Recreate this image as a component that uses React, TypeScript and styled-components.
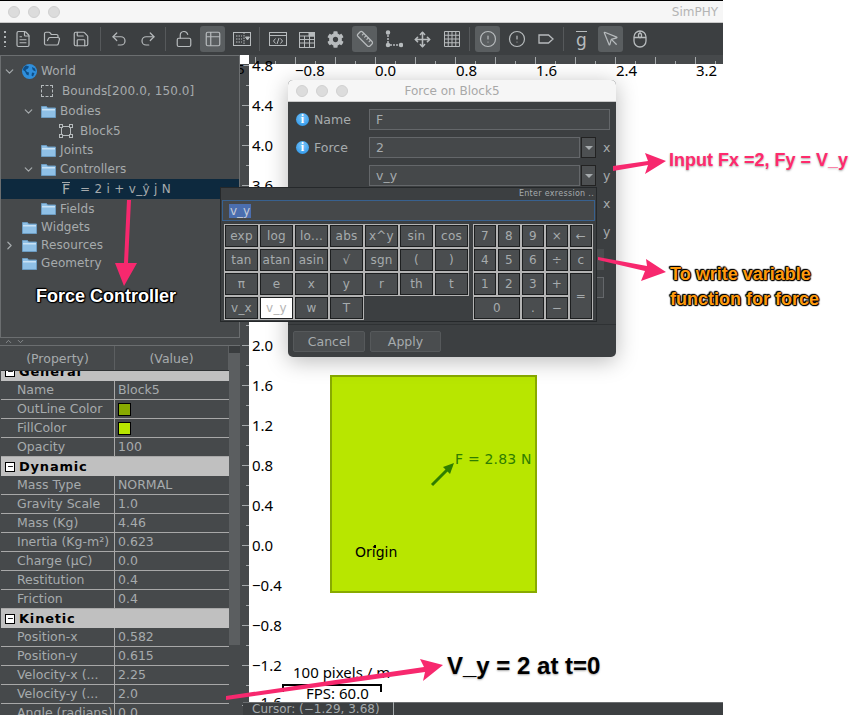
import * as React from "react";
import styled, { createGlobalStyle } from "styled-components";
import {
	FileText, FolderOpen, Save, Undo2, Redo2, LockOpen, Table2, Ruler,
	Move, CircleAlert, MousePointer, ChevronDown, ChevronRight,
	ChevronUp, Minus,
} from "lucide-react";
import { FaCog } from "react-icons/fa";

const GlobalStyle = createGlobalStyle`
	html, body {
		margin: 0;
		padding: 0;
		height: 100%;
		overflow: hidden;
		background: #fff;
	}
	#root {
		height: 100%;
	}
`;

const UI_FONT = `"DejaVu Sans", "Liberation Sans", sans-serif`;
const DARK = "#3c3f41";
const PANEL = "#46494b";
const TEXT = "#a6abad";
const LINE = "#6b6e70";

const Page = styled.div`
	position: relative;
	width: 858px;
	height: 715px;
	overflow: hidden;
	background: #fff;
	font-family: ${UI_FONT};
	font-size: 12px;
	color: ${TEXT};
`;

const AppWindow = styled.div`
	width: 723px;
	height: 715px;
	display: flex;
	flex-direction: column;
	overflow: hidden;
`;

const TitleBar = styled.div`
	height: 23px;
	flex: none;
	box-sizing: border-box;
	display: flex;
	align-items: center;
	gap: 8px;
	padding: 0 5px 0 8px;
	background: #f6f6f6;
	border-top: 1px solid #000;
	border-bottom: 1px solid #c9c9c9;
`;

const Light = styled.span`
	width: 12px;
	height: 12px;
	border-radius: 50%;
	background: #dcdcdc;
	border: 1px solid #d0d0d0;
	box-sizing: border-box;
`;

const WindowTitle = styled.span`
	margin-left: auto;
	color: #b4b4b4;
	font-size: 12px;
`;

const Toolbar = styled.div`
	height: 32px;
	flex: none;
	display: flex;
	align-items: center;
	background: ${DARK};
	padding-left: 4px;
	box-sizing: border-box;
`;

const Grip = styled.span`
	width: 2px;
	height: 16px;
	margin-right: 2px;
	background: repeating-linear-gradient(to bottom, #b0b4b6 0 2px, transparent 2px 5px);
`;

const ToolButton = styled.span<{ $active?: boolean }>`
	width: 25px;
	height: 26px;
	flex: none;
	margin: 0 2px;
	display: flex;
	align-items: center;
	justify-content: center;
	border-radius: 3px;
	color: #b7bbbd;
	background: ${(p) => (p.$active ? "#5a5e60" : "transparent")};
`;

const ToolSeparator = styled.span<{ $first?: boolean }>`
	width: 1px;
	height: 24px;
	flex: none;
	margin: 0 3px 0 ${(p) => (p.$first ? 5 : 3)}px;
	background: #56595b;
`;

const GText = styled.span`
	font-size: 17px;
	line-height: 16px;
	border-top: 1px solid #b7bbbd;
	color: #b7bbbd;
`;

const Main = styled.div`
	flex: 1;
	min-height: 0;
	display: flex;
`;

const LeftColumn = styled.div`
	width: 240px;
	flex: none;
	display: flex;
	flex-direction: column;
	background: ${PANEL};
`;

const TreePanel = styled.div`
	height: 283px;
	flex: none;
	box-sizing: border-box;
	border: 1px solid ${LINE};
	padding-top: 5px;
`;

const TreeRow = styled.div<{ $height: number; $selected?: boolean }>`
	height: ${(p) => p.$height}px;
	display: flex;
	align-items: center;
	white-space: nowrap;
	background: ${(p) => (p.$selected ? "#0d293e" : "transparent")};
`;

const TreeIndent = styled.span<{ $width: number }>`
	width: ${(p) => p.$width}px;
	flex: none;
	display: flex;
	justify-content: flex-end;
	padding-right: 6px;
	box-sizing: border-box;
	color: #a6abad;
`;

const TreeLabel = styled.span<{ $gap: number }>`
	margin-left: ${(p) => p.$gap}px;
	font-size: 12px;
	letter-spacing: 0.1px;
`;

const BoundsBox = styled.span`
	width: 12px;
	height: 12px;
	margin-left: -1px;
	border: 1px dashed #b5babc;
	box-sizing: border-box;
`;

const ForceSymbol = styled.span`
	font-size: 14px;
	line-height: 13px;
	border-top: 1px solid #a6abad;
	margin-right: 10px;
`;

const ForceExpression = styled.span`
	letter-spacing: 0.3px;
`;

const Splitter = styled.div`
	height: 7px;
	flex: none;
	display: flex;
	align-items: center;
	gap: 3px;
	padding-left: 4px;
	color: #9a9ea0;
	overflow: hidden;
`;

const PropertyPanel = styled.div`
	flex: 1;
	min-height: 0;
	display: flex;
	border-top: 1px solid ${LINE};
`;

const PropertyTable = styled.div`
	width: 228px;
	flex: none;
	display: flex;
	flex-direction: column;
	margin-left: 1px;
	font-size: 12.5px;
`;

const TableHead = styled.div`
	height: 24px;
	flex: none;
	display: grid;
	grid-template-columns: 114px 114px;
	border-bottom: 1px solid #2f3234;
`;

const HeadCell = styled.div`
	display: flex;
	align-items: center;
	justify-content: center;
	border-right: 1px solid #5c5f61;
`;

const TableBody = styled.div`
	flex: 1;
	min-height: 0;
	overflow: hidden;
`;

const TableRows = styled.div`
	margin-top: -9px;
`;

const GroupRow = styled.div`
	height: 19px;
	display: flex;
	align-items: center;
	gap: 4px;
	padding-left: 4px;
	box-sizing: border-box;
	background: #c0c0c0;
	color: #000;
	font-weight: bold;
	font-size: 13px;
	letter-spacing: 0.8px;
`;

const GroupToggle = styled.span`
	width: 8px;
	height: 8px;
	flex: none;
	display: flex;
	align-items: center;
	justify-content: center;
	background: #fff;
	border: 1px solid #000;
	color: #000;
`;

const DataRow = styled.div`
	height: 19px;
	display: grid;
	grid-template-columns: 114px 114px;
	box-sizing: border-box;
	border-bottom: 1px solid #a8a8a8;
`;

const NameCell = styled.div`
	padding-left: 16px;
	border-right: 1px solid #a8a8a8;
	line-height: 18px;
	white-space: nowrap;
	overflow: hidden;
`;

const ValueCell = styled.div`
	padding-left: 3px;
	line-height: 18px;
	display: flex;
	align-items: center;
`;

const Swatch = styled.span<{ $color: string }>`
	width: 11px;
	height: 11px;
	background: ${(p) => p.$color};
	border: 1px solid #000;
`;

const ScrollTrack = styled.div`
	width: 11px;
	flex: none;
	display: flex;
	flex-direction: column;
	background: ${PANEL};
`;

const ScrollCap = styled.div`
	height: 7px;
	background: #3a3d3f;
`;

const ScrollThumb = styled.div`
	height: 292px;
	background: #5b5e60;
`;

const CanvasColumn = styled.div`
	flex: 1;
	min-width: 0;
	display: flex;
	flex-direction: column;
`;

const TopRuler = styled.div`
	height: 9px;
	flex: none;
	margin-left: 9px;
	background-color: ${PANEL};
	background-image:
		repeating-linear-gradient(to right, #a4a8aa 0 1px, transparent 1px 40px),
		repeating-linear-gradient(to right, #a4a8aa 0 1px, transparent 1px 40px);
	background-size: 40px 7px, 40px 3px;
	background-position: 6px bottom, 26px bottom;
	background-repeat: repeat-x;
`;

const CanvasRow = styled.div`
	flex: 1;
	min-height: 0;
	display: flex;
`;

const LeftRuler = styled.div`
	width: 9px;
	flex: none;
	position: relative;
	overflow: hidden;
	color: #000;
	background-color: ${PANEL};
	background-image:
		repeating-linear-gradient(to bottom, #a4a8aa 0 1px, transparent 1px 40px),
		repeating-linear-gradient(to bottom, #a4a8aa 0 1px, transparent 1px 40px);
	background-size: 7px 40px, 3px 40px;
	background-position: right 1px, right 21px;
	background-repeat: repeat-y;
`;

const RulerClip = styled.span`
	position: absolute;
	right: 4px;
	top: -2px;
	font-size: 13px;
`;

const Canvas = styled.div`
	flex: 1;
	position: relative;
	background: #fff;
	color: #000;
	font-family: "Noto Sans", "DejaVu Sans", sans-serif;
	font-size: 15px;
`;

const AxisLabel = styled.span<{ $x: number; $y: number }>`
	position: absolute;
	left: ${(p) => p.$x}px;
	top: ${(p) => p.$y}px;
	line-height: 16px;
	white-space: nowrap;
`;

const Block = styled.div`
	position: absolute;
	left: 81px;
	top: 311px;
	width: 207px;
	height: 218px;
	box-sizing: border-box;
	background: #b8e600;
	border: 2px solid #88aa00;
	font-family: ${UI_FONT};
	font-size: 14px;
`;

const ForceLabel = styled.span`
	position: absolute;
	left: 123px;
	top: 74px;
	color: #2f7d00;
	letter-spacing: 0.2px;
	white-space: nowrap;
`;

const OriginLabel = styled.span`
	position: absolute;
	left: 23px;
	top: 167px;
	color: #000;
`;

const OriginDot = styled.span`
	position: absolute;
	left: 42px;
	top: 168px;
	width: 2px;
	height: 3px;
	background: #000;
`;

const ForceArrow = styled.svg`
	position: absolute;
	left: 98px;
	top: 84px;
`;

const ScaleBar = styled.div`
	position: absolute;
	left: 33px;
	top: 620px;
	width: 100px;
	height: 8px;
	border: 2px solid #000;
	border-bottom: none;
	box-sizing: border-box;
`;

const StatusBar = styled.div`
	position: absolute;
	left: 243px;
	top: 702px;
	width: 480px;
	height: 13px;
	display: flex;
	align-items: center;
	padding-left: 9px;
	box-sizing: border-box;
	background: ${DARK};
	border-top: 1px solid #6b6e70;
	font-size: 12px;
`;

const StatusText = styled.span`
	width: 141px;
	flex: none;
	white-space: nowrap;
	border-right: 1px solid #a6abad;
`;

const Dialog = styled.div`
	position: absolute;
	left: 288px;
	top: 80px;
	width: 328px;
	height: 277px;
	display: flex;
	flex-direction: column;
	border-radius: 5px;
	overflow: hidden;
	background: ${DARK};
	box-shadow: 0 4px 22px rgba(0, 0, 0, 0.28);
`;

const DialogTitleBar = styled.div`
	height: 21px;
	flex: none;
	position: relative;
	display: flex;
	align-items: center;
	justify-content: center;
	background: #f6f6f6;
	border-bottom: 1px solid #c9c9c9;
	color: #a8a8a8;
`;

const DialogLights = styled.div`
	position: absolute;
	left: 8px;
	display: flex;
	gap: 8px;
`;

const DialogBody = styled.div`
	flex: 1;
	display: flex;
	flex-direction: column;
	gap: 7px;
	padding: 7px 6px 0 8px;
`;

const FormRow = styled.div`
	height: 21px;
	display: flex;
	align-items: center;
`;

const FormLabel = styled.div`
	width: 73px;
	flex: none;
	display: flex;
	align-items: center;
	gap: 5px;
	font-size: 12.5px;
`;

const InfoDot = styled.span`
	width: 13px;
	height: 13px;
	border-radius: 50%;
	display: flex;
	align-items: center;
	justify-content: center;
	background: radial-gradient(circle at 50% 35%, #7cc6f8, #1f8fe8);
	color: #fff;
	font-family: "Liberation Serif", serif;
	font-weight: bold;
	font-size: 12px;
`;

const FormInput = styled.div<{ $width: number; $plain?: boolean }>`
	width: ${(p) => p.$width}px;
	height: 21px;
	flex: none;
	box-sizing: border-box;
	display: flex;
	align-items: center;
	padding-left: 6px;
	background: ${(p) => (p.$plain ? "#4a4d4f" : "#45484a")};
	border: 1px solid ${(p) => (p.$plain ? "transparent" : "#64676a")};
	font-size: 12.5px;
`;

const DropButton = styled.span`
	width: 15px;
	height: 21px;
	flex: none;
	margin-left: 1px;
	box-sizing: border-box;
	display: flex;
	align-items: center;
	justify-content: center;
	border: 1px solid #222;
	background: #4d5052;
	&::after {
		content: "";
		border-left: 4px solid transparent;
		border-right: 4px solid transparent;
		border-top: 4px solid #a6abad;
	}
`;

const AxisName = styled.span`
	margin-left: 7px;
	font-size: 12.5px;
`;

const DialogFooter = styled.div`
	height: 33px;
	flex: none;
	display: flex;
	gap: 5px;
	padding: 6px 0 0 5px;
	box-sizing: border-box;
	border-top: 1px solid #2f3234;
	margin-top: auto;
`;

const FooterButton = styled.span<{ $width: number }>`
	width: ${(p) => p.$width}px;
	height: 21px;
	display: flex;
	align-items: center;
	justify-content: center;
	border-radius: 2px;
	background: #4a4d4f;
	border: 1px solid #56595b;
	box-sizing: border-box;
	font-size: 12.5px;
`;

const ExpressionPopup = styled.div`
	position: absolute;
	left: 220px;
	top: 187px;
	width: 377px;
	height: 135px;
	box-sizing: border-box;
	background: ${DARK};
	border: 1px solid #25282a;
	padding: 0 1px;
`;

const PopupHint = styled.div`
	height: 12px;
	text-align: right;
	font-size: 8px;
	line-height: 12px;
	letter-spacing: 0.3px;
	padding-right: 1px;
`;

const ExpressionInput = styled.div`
	height: 21px;
	box-sizing: border-box;
	display: flex;
	align-items: center;
	padding-left: 6px;
	background: #45484a;
	border: 1px solid #38618f;
`;

const Selected = styled.span`
	background: #4b6eaf;
	color: #c6ccd8;
	padding: 0 1px;
`;

const Keypads = styled.div`
	display: flex;
	gap: 4px;
	margin-top: 3px;
	padding-left: 2px;
`;

const KeyGrid = styled.div<{ $cols: number; $cell: number }>`
	display: grid;
	grid-template-columns: repeat(${(p) => p.$cols}, ${(p) => p.$cell}px);
	grid-auto-rows: 24px;
	align-self: flex-start;
	background: transparent;
`;

const Key = styled.span<{ $active?: boolean; $wide?: boolean; $tall?: boolean }>`
	display: flex;
	align-items: center;
	justify-content: center;
	box-sizing: border-box;
	white-space: nowrap;
	border: 1px solid #b4b4b4;
	outline: 1px solid #1d1f20;
	outline-offset: -2px;
	background: ${(p) => (p.$active ? "#fff" : "#4a4d4f")};
	color: ${(p) => (p.$active ? "#b4b4b4" : TEXT)};
	font-size: 12px;
	letter-spacing: 0.2px;
	${(p) => (p.$wide ? "grid-column: span 2;" : "")}
	${(p) => (p.$tall ? "grid-row: span 2;" : "")}
`;

const Overlay = styled.svg`
	position: absolute;
	left: 0;
	top: 0;
	pointer-events: none;
`;

const Note = styled.div<{ $x: number; $y: number; $size: number; $kind: "white" | "pink" | "orange" | "black" }>`
	position: absolute;
	left: ${(p) => p.$x}px;
	top: ${(p) => p.$y}px;
	font-family: "Liberation Sans", Arial, sans-serif;
	font-weight: bold;
	font-size: ${(p) => p.$size}px;
	line-height: 25px;
	white-space: nowrap;
	color: ${(p) =>
		p.$kind === "white" ? "#fff" : p.$kind === "pink" ? "#ff2a6d" : p.$kind === "orange" ? "#ff9a0d" : "#000"};
	text-shadow: ${(p) =>
		p.$kind === "white" || p.$kind === "orange"
			? "1px 0 1px #000, -1px 0 1px #000, 0 1px 1px #000, 0 -1px 1px #000, 1px 1px 1px #000, -1px -1px 1px #000"
			: "0 1px 2px rgba(0,0,0,0.35), 1px 0 1px #fff, -1px 0 1px #fff"};
`;

const Icon = { size: 18, strokeWidth: 1.6 };

type TreeEntry = { h: number; indent: number; gap?: number; chevron?: "down" | "right"; icon: string; label: string };

const treeRows: TreeEntry[] = [
	{ h: 20, indent: 21, chevron: "down", icon: "globe", label: "World" },
	{ h: 20, indent: 41, gap: 9, icon: "bounds", label: "Bounds[200.0, 150.0]" },
	{ h: 20, indent: 40, chevron: "down", icon: "folder", label: "Bodies" },
	{ h: 20, indent: 58, gap: 7, icon: "body", label: "Block5" },
	{ h: 18, indent: 40, icon: "folder", label: "Joints" },
	{ h: 20, indent: 40, chevron: "down", icon: "folder", label: "Controllers" },
];

const treeRowsAfter: TreeEntry[] = [
	{ h: 19, indent: 40, icon: "folder", label: "Fields" },
	{ h: 18, indent: 21, icon: "folder", label: "Widgets" },
	{ h: 18, indent: 21, chevron: "right", icon: "folder", label: "Resources" },
	{ h: 18, indent: 21, icon: "folder", label: "Geometry" },
];

const GlobeIcon = () => (
	<svg width="15" height="15" viewBox="0 0 15 15">
		<circle cx="7.5" cy="7.5" r="7.5" fill="#2f8fdc" />
		<path d="M4 1.5l3 1-1 2-2.5 1.5 1.5 2 2 .5-.5 3-2-1-1.5-3-2-1.5C1 4 2.5 2.5 4 1.5zM10 3l3 1.5.8 3-2.3-1-1-1zM10 8.5l2.5.5-1.5 3.5-1.5-1z" fill="#0f4f88" />
	</svg>
);

const FolderIcon = () => (
	<svg width="15" height="13" viewBox="0 0 15 13">
		<path d="M0.5 1.5h5l1 1.5h8v9.5h-14z" fill="#8fc0e6" stroke="#6c9cc2" />
		<rect x="1" y="4" width="13" height="1.5" fill="#c8e2f6" />
	</svg>
);

const BodyIcon = () => (
	<svg width="14" height="14" viewBox="0 0 14 14" fill="none" stroke="#b5babc">
		<rect x="2.5" y="2.5" width="9" height="9" />
		<rect x="0.5" y="0.5" width="3" height="3" fill="#46494b" />
		<rect x="10.5" y="0.5" width="3" height="3" fill="#46494b" />
		<rect x="0.5" y="10.5" width="3" height="3" fill="#46494b" />
		<rect x="10.5" y="10.5" width="3" height="3" fill="#46494b" />
	</svg>
);

function TreeItem({ row }: { row: TreeEntry }) {
	return (
		<TreeRow $height={row.h}>
			<TreeIndent $width={row.indent}>
				{row.chevron === "down" && <ChevronDown size={13} strokeWidth={2.2} />}
				{row.chevron === "right" && <ChevronRight size={13} strokeWidth={2.2} />}
			</TreeIndent>
			{row.icon === "globe" && <GlobeIcon />}
			{row.icon === "bounds" && <BoundsBox />}
			{row.icon === "folder" && <FolderIcon />}
			{row.icon === "body" && <BodyIcon />}
			<TreeLabel $gap={row.gap ?? 4}>{row.label}</TreeLabel>
		</TreeRow>
	);
}

type PropRow = { group: string } | { name: React.ReactNode; value?: string; swatch?: string };

const propRows: PropRow[] = [
	{ group: "General" },
	{ name: "Name", value: "Block5" },
	{ name: "OutLine Color", swatch: "#88aa00" },
	{ name: "FillColor", swatch: "#b8e600" },
	{ name: "Opacity", value: "100" },
	{ group: "Dynamic" },
	{ name: "Mass Type", value: "NORMAL" },
	{ name: "Gravity Scale", value: "1.0" },
	{ name: "Mass (Kg)", value: "4.46" },
	{ name: "Inertia (Kg-m²)", value: "0.623" },
	{ name: "Charge (µC)", value: "0.0" },
	{ name: "Restitution", value: "0.4" },
	{ name: "Friction", value: "0.4" },
	{ group: "Kinetic" },
	{ name: "Position-x", value: "0.582" },
	{ name: "Position-y", value: "0.615" },
	{ name: "Velocity-x (...", value: "2.25" },
	{ name: "Velocity-y (...", value: "2.0" },
	{ name: "Angle (radians)", value: "0.0" },
];

const xLabels: [string, number][] = [["−0.8", 46], ["0.0", 126], ["0.8", 207], ["1.6", 287], ["2.4", 367], ["3.2", 447]];
const yLabels: [string, number][] = [
	["4.8", -7], ["4.4", 33], ["4.0", 73], ["3.6", 113], ["2.0", 273], ["1.6", 313], ["1.2", 353], ["0.8", 393],
	["0.4", 433], ["0.0", 473], ["−0.4", 513], ["−0.8", 553], ["−1.2", 593], ["−1.6", 630],
];

const leftKeys = ["exp", "log", "lo...", "abs", "x^y", "sin", "cos", "tan", "atan", "asin", "√", "sgn", "(", ")", "π", "e", "x", "y", "r", "th", "t", "v_x", "v_y", "w", "T"];

export default function App() {
	return (
		<Page>
			<GlobalStyle />
			<AppWindow>
				<TitleBar>
					<Light />
					<Light />
					<Light />
					<WindowTitle>SimPHY</WindowTitle>
				</TitleBar>
				<Toolbar>
					<Grip />
					<ToolButton><FileText {...Icon} /></ToolButton>
					<ToolButton><FolderOpen {...Icon} /></ToolButton>
					<ToolButton><Save {...Icon} /></ToolButton>
					<ToolSeparator $first />
					<ToolButton><Undo2 {...Icon} /></ToolButton>
					<ToolButton><Redo2 {...Icon} /></ToolButton>
					<ToolSeparator />
					<ToolButton><LockOpen {...Icon} /></ToolButton>
					<ToolButton $active><Table2 {...Icon} /></ToolButton>
					<ToolButton>
						<svg width="18" height="16" viewBox="0 0 18 16" fill="none" stroke="currentColor">
							<rect x="0.5" y="1.5" width="17" height="13" />
							<path d="M11 1.5v13M3 5h6M3 8h6M3 11h6" strokeDasharray="1.5 1" />
							<path d="M12.5 6h4l-2 3z" fill="currentColor" />
						</svg>
					</ToolButton>
					<ToolSeparator />
					<ToolButton>
						<svg width="18" height="16" viewBox="0 0 18 16" fill="none" stroke="currentColor">
							<rect x="0.5" y="1.5" width="17" height="13" />
							<path d="M0.5 4.5h17M6.5 7.5l-2 2.5 2 2.5M11.5 7.5l2 2.5-2 2.5M10 7l-2 6" />
						</svg>
					</ToolButton>
					<ToolButton>
						<svg width="16" height="17" viewBox="0 0 16 17" fill="none" stroke="currentColor">
							<rect x="0.5" y="1.5" width="15" height="15" />
							<path d="M0.5 5h15M0.5 8.5h15M0.5 12h15M5.5 5v11M10.5 5v11" />
							<rect x="10" y="1.5" width="5.5" height="3.5" fill="currentColor" />
						</svg>
					</ToolButton>
					<ToolButton><FaCog size={17} /></ToolButton>
					<ToolButton $active><Ruler {...Icon} /></ToolButton>
					<ToolButton>
						<svg width="18" height="18" viewBox="0 0 18 18" fill="none" stroke="currentColor" strokeWidth="1.5">
							<path d="M3 2v13h13" strokeDasharray="2 1" />
							<circle cx="3" cy="2.5" r="1.5" fill="currentColor" />
							<circle cx="3" cy="15" r="1.5" fill="currentColor" />
							<circle cx="16" cy="15" r="1.5" fill="currentColor" />
						</svg>
					</ToolButton>
					<ToolButton><Move size={17} strokeWidth={2.2} /></ToolButton>
					<ToolButton>
						<svg width="16" height="16" viewBox="0 0 16 16" fill="none" stroke="currentColor">
							<path d="M0.5 0.5h15v15h-15zM4.25 0.5v15M8 0.5v15M11.75 0.5v15M0.5 4.25h15M0.5 8h15M0.5 11.75h15" />
						</svg>
					</ToolButton>
					<ToolSeparator />
					<ToolButton $active><CircleAlert {...Icon} /></ToolButton>
					<ToolButton><CircleAlert {...Icon} /></ToolButton>
					<ToolButton>
						<svg width="16" height="12" viewBox="0 0 16 12" fill="none" stroke="currentColor" strokeWidth="1.3">
							<path d="M1 2h9.5L15 6l-4.5 4H1z" />
						</svg>
					</ToolButton>
					<ToolSeparator />
					<ToolButton><GText>g</GText></ToolButton>
					<ToolButton $active><MousePointer {...Icon} /></ToolButton>
					<ToolButton>
						<svg width="14" height="18" viewBox="0 0 14 18" fill="none" stroke="currentColor" strokeWidth="1.3">
							<rect x="1" y="1" width="12" height="16" rx="6" />
							<path d="M1 7.5h12M7 1v3" />
							<rect x="5.5" y="3.5" width="3" height="4" rx="1" />
						</svg>
					</ToolButton>
				</Toolbar>
				<Main>
					<LeftColumn>
						<TreePanel>
							{treeRows.map((row) => <TreeItem key={row.label} row={row} />)}
							<TreeRow $height={20} $selected>
								<TreeIndent $width={61} />
								<ForceSymbol>F</ForceSymbol>
								<ForceExpression>= 2 i + v_ŷ j N</ForceExpression>
							</TreeRow>
							{treeRowsAfter.map((row) => <TreeItem key={row.label} row={row} />)}
						</TreePanel>
						<Splitter>
							<ChevronUp size={9} />
							<ChevronDown size={9} />
						</Splitter>
						<PropertyPanel>
							<PropertyTable>
								<TableHead>
									<HeadCell>(Property)</HeadCell>
									<HeadCell>(Value)</HeadCell>
								</TableHead>
								<TableBody>
									<TableRows>
										{propRows.map((row, i) =>
											"group" in row ? (
												<GroupRow key={i}>
													<GroupToggle><Minus size={7} strokeWidth={3} /></GroupToggle>
													{row.group}
												</GroupRow>
											) : (
												<DataRow key={i}>
													<NameCell>{row.name}</NameCell>
													<ValueCell>
														{row.swatch ? <Swatch $color={row.swatch} /> : row.value}
													</ValueCell>
												</DataRow>
											)
										)}
									</TableRows>
								</TableBody>
							</PropertyTable>
							<ScrollTrack>
								<ScrollCap />
								<ScrollThumb />
							</ScrollTrack>
						</PropertyPanel>
					</LeftColumn>
					<CanvasColumn>
						<TopRuler />
						<CanvasRow>
							<LeftRuler>
								<RulerClip>5</RulerClip>
							</LeftRuler>
							<Canvas>
								{xLabels.map(([t, x]) => <AxisLabel key={t} $x={x} $y={-2}>{t}</AxisLabel>)}
								{yLabels.map(([t, y]) => <AxisLabel key={t} $x={3} $y={y}>{t}</AxisLabel>)}
								<Block>
									<ForceArrow width="26" height="26" viewBox="0 0 26 26">
										<path d="M2 24L20 6" stroke="#2f7d00" strokeWidth="3" />
										<path d="M24 2L13 6l7 7z" fill="#2f7d00" />
									</ForceArrow>
									<ForceLabel>F = 2.83 N</ForceLabel>
									<OriginLabel>Origin</OriginLabel>
									<OriginDot />
								</Block>
								<AxisLabel $x={44} $y={600}>100 pixels / m</AxisLabel>
								<ScaleBar />
								<AxisLabel $x={57} $y={621}>FPS: 60.0</AxisLabel>
							</Canvas>
						</CanvasRow>
					</CanvasColumn>
				</Main>
			</AppWindow>

			<StatusBar>
				<StatusText>Cursor: (−1.29, 3.68)</StatusText>
			</StatusBar>

			<Dialog>
				<DialogTitleBar>
					<DialogLights>
						<Light />
						<Light />
						<Light />
					</DialogLights>
					Force on Block5
				</DialogTitleBar>
				<DialogBody>
					<FormRow>
						<FormLabel><InfoDot>i</InfoDot>Name</FormLabel>
						<FormInput $width={241}>F</FormInput>
					</FormRow>
					<FormRow>
						<FormLabel><InfoDot>i</InfoDot>Force</FormLabel>
						<FormInput $width={211}>2</FormInput>
						<DropButton />
						<AxisName>x</AxisName>
					</FormRow>
					<FormRow>
						<FormLabel />
						<FormInput $width={211}>v_y</FormInput>
						<DropButton />
						<AxisName>y</AxisName>
					</FormRow>
					<FormRow>
						<FormLabel />
						<FormInput $width={211} />
						<DropButton />
						<AxisName>x</AxisName>
					</FormRow>
					<FormRow>
						<FormLabel />
						<FormInput $width={211} />
						<DropButton />
						<AxisName>y</AxisName>
					</FormRow>
					<FormRow>
						<FormLabel />
						<FormInput $width={235} $plain />
					</FormRow>
					<FormRow>
						<FormLabel />
						<FormInput $width={235} />
					</FormRow>
				</DialogBody>
				<DialogFooter>
					<FooterButton $width={72}>Cancel</FooterButton>
					<FooterButton $width={71}>Apply</FooterButton>
				</DialogFooter>
			</Dialog>

			<ExpressionPopup>
				<PopupHint>Enter exression ..</PopupHint>
				<ExpressionInput><Selected>v_y</Selected></ExpressionInput>
				<Keypads>
					<KeyGrid $cols={7} $cell={35}>
						{leftKeys.map((k) => <Key key={k} $active={k === "v_y"}>{k}</Key>)}
					</KeyGrid>
					<KeyGrid $cols={5} $cell={24}>
						{["7", "8", "9", "×", "←", "4", "5", "6", "÷", "c", "1", "2", "3", "+"].map((k) => <Key key={k}>{k}</Key>)}
						<Key $tall>=</Key>
						<Key $wide>0</Key>
						<Key>.</Key>
						<Key>−</Key>
					</KeyGrid>
				</Keypads>
			</ExpressionPopup>

			<Overlay width="858" height="715" viewBox="0 0 858 715">
				<polygon fill="#f7286e" points="127,200 131,200 128,263 137,263 124,286 115,263 124,263" />
				<polygon fill="#f7286e" points="613,166 648,161 645,153 666,161 645,174 648,165 613,171" />
				<polygon fill="#f7286e" points="598,257 647,266 646,259 666,272 641,281 645,271 598,260" />
				<polygon fill="#f7286e" points="226,696 424,667 420,659 443,665 423,681 425,672 226,700" />
			</Overlay>
			<Note $x={36} $y={284} $size={18} $kind="white">Force Controller</Note>
			<Note $x={669} $y={148} $size={18} $kind="pink">Input Fx =2, Fy = V_y</Note>
			<Note $x={670} $y={262} $size={18} $kind="orange">To write variable</Note>
			<Note $x={670} $y={287} $size={18} $kind="orange">function for force</Note>
			<Note $x={447} $y={653} $size={24} $kind="black">V_y = 2 at t=0</Note>
		</Page>
	);
}
